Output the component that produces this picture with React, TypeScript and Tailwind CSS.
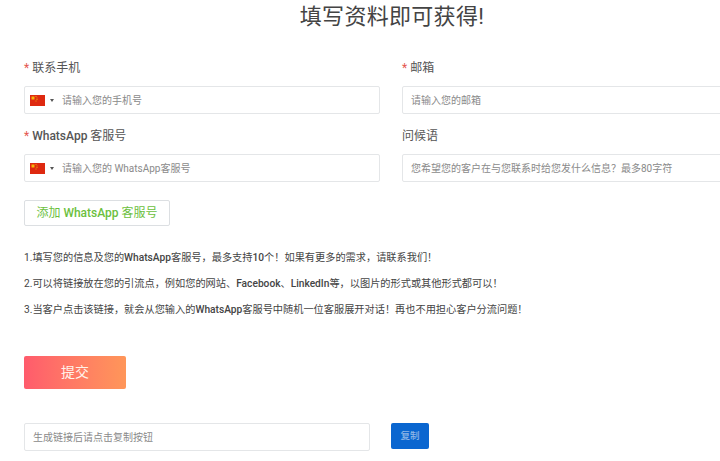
const font = "font-['Roboto','Noto_Sans_CJK_SC',sans-serif]";

function ChinaFlag() {
  return (
    <svg width="15" height="11" viewBox="0 0 15 11" className="shrink-0 block">
      <rect width="15" height="11" fill="#de2910" />
      <rect x="1.5" y="1.5" width="3" height="3" fill="#f5b80a" />
      <rect x="5.5" y="1" width="1" height="1" fill="#f0a00a" />
      <rect x="6.5" y="2.5" width="1" height="1" fill="#f0a00a" />
      <rect x="6.5" y="4" width="1" height="1" fill="#f0a00a" />
      <rect x="5.5" y="5.5" width="1" height="1" fill="#f0a00a" />
    </svg>
  );
}

function Latin({ children }: { children: string }) {
  return <span className="font-medium">{children}</span>;
}

function Label({ children, required }: { children: React.ReactNode; required?: boolean }) {
  return (
    <div className="h-[20px] text-[12px] leading-[20px] text-[#555]">
      {required && <span className="text-[#e4574f] mr-[3px]">*</span>}
      {children}
    </div>
  );
}

function Field({ placeholder, flag }: { placeholder: string; flag?: boolean }) {
  return (
    <div className="mt-[8px] h-[28px] flex items-center border border-[#e4e6e8] rounded-[2px] bg-white px-[5px]">
      {flag && (
        <>
          <ChinaFlag />
          <span className="ml-[5px] mr-[8px] w-0 h-0 border-x-[2.5px] border-x-transparent border-t-[3px] border-t-[#555]" />
        </>
      )}
      <span className={`text-[10px] text-[#8a8a8a] whitespace-nowrap ${flag ? "" : "ml-[3px]"}`}>{placeholder}</span>
    </div>
  );
}

export default function App() {
  return (
    <div className={`w-[720px] h-[461px] overflow-hidden bg-white ${font}`}>
      <div className="w-[760px] pl-[24px]">
        <h1 className="h-[34px] text-center text-[22px] leading-[34px] tracking-[0.3px] text-[#444]">填写资料即可获得!</h1>

        <div className="mt-[24px] grid grid-cols-[356px_358px] gap-x-[22px] gap-y-[12px]">
          <div>
            <Label required>联系手机</Label>
            <Field placeholder="请输入您的手机号" flag />
          </div>
          <div>
            <Label required>邮箱</Label>
            <Field placeholder="请输入您的邮箱" />
          </div>
          <div>
            <Label required><Latin>WhatsApp</Latin> 客服号</Label>
            <Field placeholder="请输入您的 WhatsApp客服号" flag />
          </div>
          <div>
            <Label>问候语</Label>
            <Field placeholder="您希望您的客户在与您联系时给您发什么信息？最多80字符" />
          </div>
        </div>

        <button className="mt-[18px] block w-[146px] h-[26px] border border-[#dcdfe2] rounded-[2px] bg-white text-[12px] text-[#6cbf3e]">
          添加 <Latin>WhatsApp</Latin> 客服号
        </button>

        <div className="mt-[24px] flex flex-col gap-[10px] text-[10.2px] leading-[16px] text-[#444] whitespace-nowrap">
          <p>1.填写您的信息及您的<Latin>WhatsApp</Latin>客服号，最多支持<Latin>10</Latin>个！如果有更多的需求，请联系我们！</p>
          <p>2.可以将链接放在您的引流点，例如您的网站、<Latin>Facebook</Latin>、<Latin>LinkedIn</Latin>等，以图片的形式或其他形式都可以！</p>
          <p>3.当客户点击该链接，就会从您输入的<Latin>WhatsApp</Latin>客服号中随机一位客服展开对话！再也不用担心客户分流问题！</p>
        </div>

        <button className="mt-[38px] block w-[102px] h-[33px] rounded-[2px] bg-gradient-to-r from-[#ff5b6c] to-[#ff9659] text-[14px] text-[#fff3ea]">
          提交
        </button>

        <div className="mt-[34px] flex items-start gap-[21px]">
          <div className="w-[346px] h-[28px] flex items-center border border-[#e4e6e8] rounded-[2px] px-[8px]">
            <span className="text-[10px] text-[#8a8a8a]">生成链接后请点击复制按钮</span>
          </div>
          <button className="w-[38px] h-[26px] rounded-[2px] bg-[#0a66d0] text-[9.5px] font-medium text-[#8fb6e6]">复制</button>
        </div>
      </div>
    </div>
  );
}
